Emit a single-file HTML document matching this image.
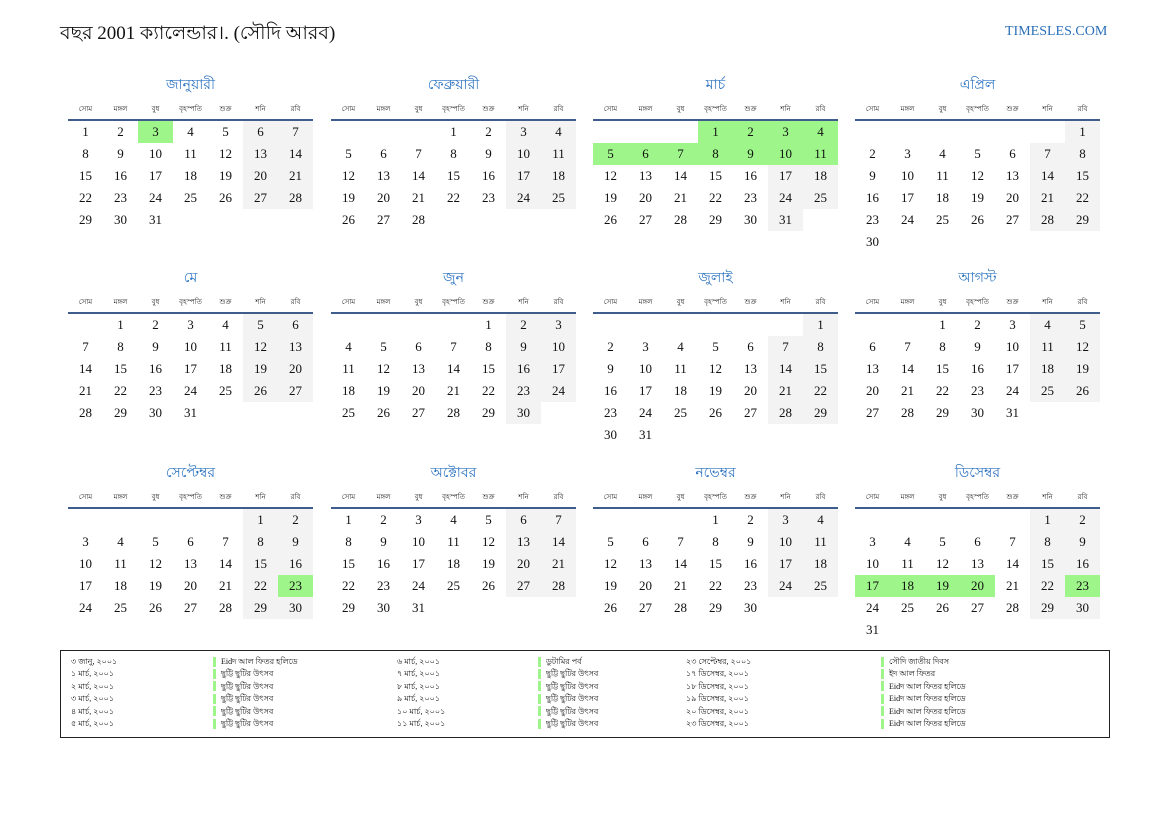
<!DOCTYPE html>
<html><head><meta charset="utf-8">
<style>
body{margin:0;width:1169px;height:827px;background:#fff;position:relative;font-family:"Liberation Serif","Noto Serif CJK SC",serif;color:#111;overflow:hidden}
.t{position:absolute;left:60px;top:19px;font-size:19px}
.site{position:absolute;left:1005px;top:24px;font-size:14px;color:#2a6fb8}
.m{position:absolute;width:245px}
.mt{position:absolute;top:-3px;width:245px;text-align:center;color:#2a72c0;font-size:14px}
.hd{position:absolute;top:27px;width:35px;text-align:center;font-size:7px;color:#222}
.ln{position:absolute;top:43px;left:0;width:245px;height:2px;background:#3f5d8c}
.c{position:absolute;width:35px;height:22px;line-height:22px;text-align:center;font-size:13px}
.g{background:#f3f3f3}.h{background:#9ef58a}
.lg{position:absolute;left:60px;top:650px;width:1048px;height:86px;border:1.5px solid #222}
.r{position:absolute;font-size:8px;white-space:nowrap}
.b{position:absolute;width:3px;height:10px;background:#9ef58a}
</style></head><body>
<div class="t">বছর 2001 ক্যালেন্ডার।. (সৌদি আরব)</div>
<div class="site">TIMESLES.COM</div>
<div id="cal"></div>
<div class="lg" id="lg"></div>
<script>
var names=["জানুয়ারী","ফেব্রুয়ারী","মার্চ","এপ্রিল","মে","জুন","জুলাই","আগস্ট","সেপ্টেম্বর","অক্টোবর","নভেম্বর","ডিসেম্বর"];
var days=[31,28,31,30,31,30,31,31,30,31,30,31];
var off=[0,3,3,6,1,4,6,2,5,0,3,5];
var hdr=["সোম","মঙ্গল","বুধ","বৃহস্পতি","শুক্র","শনি","রবি"];
var hl={0:[3],2:[1,2,3,4,5,6,7,8,9,10,11],8:[23],11:[17,18,19,20,23]};
var xs=[68,331,593,855],ys=[76,269,464];
var h="";
for(var m=0;m<12;m++){
 var x=xs[m%4],y=ys[Math.floor(m/4)];
 h+='<div class="m" style="left:'+x+'px;top:'+y+'px"><div class="mt">'+names[m]+'</div>';
 for(var i=0;i<7;i++)h+='<div class="hd" style="left:'+(i*35)+'px">'+hdr[i]+'</div>';
 h+='<div class="ln"></div>';
 for(var d=1;d<=days[m];d++){
  var p=off[m]+d-1,col=p%7,row=Math.floor(p/7);
  var cls="c";
  if(hl[m]&&hl[m].indexOf(d)>=0)cls+=" h";else if(col>=5)cls+=" g";
  h+='<div class="'+cls+'" style="left:'+(col*35)+'px;top:'+(45+row*22)+'px">'+d+'</div>';
 }
 h+='</div>';
}
document.getElementById('cal').innerHTML=h;
var L=[
[["৩ জানু, ২০০১","Eidদ আল ফিতর হলিডে"],["১ মার্চ, ২০০১","ছুট্টি ছুটির উৎসব"],["২ মার্চ, ২০০১","ছুট্টি ছুটির উৎসব"],["৩ মার্চ, ২০০১","ছুট্টি ছুটির উৎসব"],["৪ মার্চ, ২০০১","ছুট্টি ছুটির উৎসব"],["৫ মার্চ, ২০০১","ছুট্টি ছুটির উৎসব"]],
[["৬ মার্চ, ২০০১","ডুটামির পর্ব"],["৭ মার্চ, ২০০১","ছুট্টি ছুটির উৎসব"],["৮ মার্চ, ২০০১","ছুট্টি ছুটির উৎসব"],["৯ মার্চ, ২০০১","ছুট্টি ছুটির উৎসব"],["১০ মার্চ, ২০০১","ছুট্টি ছুটির উৎসব"],["১১ মার্চ, ২০০১","ছুট্টি ছুটির উৎসব"]],
[["২৩ সেপ্টেম্বর, ২০০১","সৌদি জাতীয় দিবস"],["১৭ ডিসেম্বর, ২০০১","ইদ আল ফিতর"],["১৮ ডিসেম্বর, ২০০১","Eidদ আল ফিতর হলিডে"],["১৯ ডিসেম্বর, ২০০১","Eidদ আল ফিতর হলিডে"],["২০ ডিসেম্বর, ২০০১","Eidদ আল ফিতর হলিডে"],["২৩ ডিসেম্বর, ২০০১","Eidদ আল ফিতর হলিডে"]]];
var dx=[10,336,625],bx=[152,477,820];
var g="";
for(var c=0;c<3;c++)for(var r=0;r<6;r++){
 var ty=5+r*12.4;
 g+='<div class="r" style="left:'+dx[c]+'px;top:'+ty+'px">'+L[c][r][0]+'</div>';
 g+='<div class="b" style="left:'+bx[c]+'px;top:'+(ty+0.5)+'px"></div>';
 g+='<div class="r" style="left:'+(bx[c]+8)+'px;top:'+ty+'px">'+L[c][r][1]+'</div>';
}
document.getElementById('lg').innerHTML=g;
</script>
</body></html>
